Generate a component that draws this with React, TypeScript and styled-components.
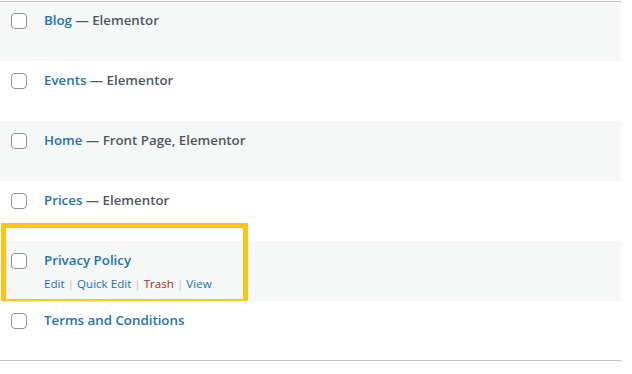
import React from 'react';
import styled, { createGlobalStyle } from 'styled-components';

const GlobalStyle = createGlobalStyle`
  html, body {
    margin: 0;
    padding: 0;
    background: #fff;
  }
  body {
    font-family: "Open Sans", "Noto Sans", "Liberation Sans", sans-serif;
    font-size: 13px;
    color: #3c434a;
  }
`;

const Table = styled.div`
  position: relative;
  width: 621px;
  margin-top: 1px;
  border-top: 1px solid #c3c4c7;
  border-bottom: 1px solid #c3c4c7;
`;

const Row = styled.div<{ $striped?: boolean }>`
  position: relative;
  display: flex;
  align-items: flex-start;
  height: 60px;
  box-sizing: border-box;
  padding: 12px 10px 0 11px;
  background: ${(p) => (p.$striped ? '#f6f7f7' : '#fff')};

  &:first-child {
    height: 59px;
    padding-top: 11px;
  }
  &:last-child {
    height: 59px;
  }
`;

const Checkbox = styled.span`
  flex: none;
  width: 16px;
  height: 16px;
  box-sizing: border-box;
  border: 1px solid #8c8f94;
  border-radius: 4px;
  background: #fff;
`;

const Cell = styled.div`
  margin-left: 17px;
  margin-top: -2px;
  line-height: 18px;
`;

const Title = styled.div`
  font-weight: 600;
  font-size: 13.3px;
  color: #50575e;
  white-space: nowrap;
`;

const TitleLink = styled.a`
  color: #2271b1;
  text-decoration: none;
`;

const Actions = styled.div`
  margin-top: 6px;
  font-size: 11.6px;
  color: #c3c4c7;
  white-space: nowrap;
`;

const Action = styled.a<{ $danger?: boolean }>`
  color: ${(p) => (p.$danger ? '#a62a2b' : '#2271b1')};
  text-decoration: none;
`;

const Highlight = styled.div`
  position: absolute;
  left: 1px;
  top: -18px;
  width: 247px;
  height: 81px;
  box-sizing: border-box;
  border: 5px solid #fcc419;
  pointer-events: none;
`;

const pages = [
  { title: 'Blog', state: 'Elementor' },
  { title: 'Events', state: 'Elementor' },
  { title: 'Home', state: 'Front Page, Elementor' },
  { title: 'Prices', state: 'Elementor' },
  { title: 'Privacy Policy', actions: true },
  { title: 'Terms and Conditions' },
];

export default function App() {
  return (
    <>
      <GlobalStyle />
      <Table>
        {pages.map((page, i) => (
          <Row key={page.title} $striped={i % 2 === 0}>
            <Checkbox />
            <Cell>
              <Title>
                <TitleLink href="#">{page.title}</TitleLink>
                {page.state && ` — ${page.state}`}
              </Title>
              {page.actions && (
                <Actions>
                  <Action href="#">Edit</Action> | <Action href="#">Quick Edit</Action> |{' '}
                  <Action href="#" $danger>Trash</Action> | <Action href="#">View</Action>
                </Actions>
              )}
            </Cell>
            {page.actions && <Highlight />}
          </Row>
        ))}
      </Table>
    </>
  );
}
